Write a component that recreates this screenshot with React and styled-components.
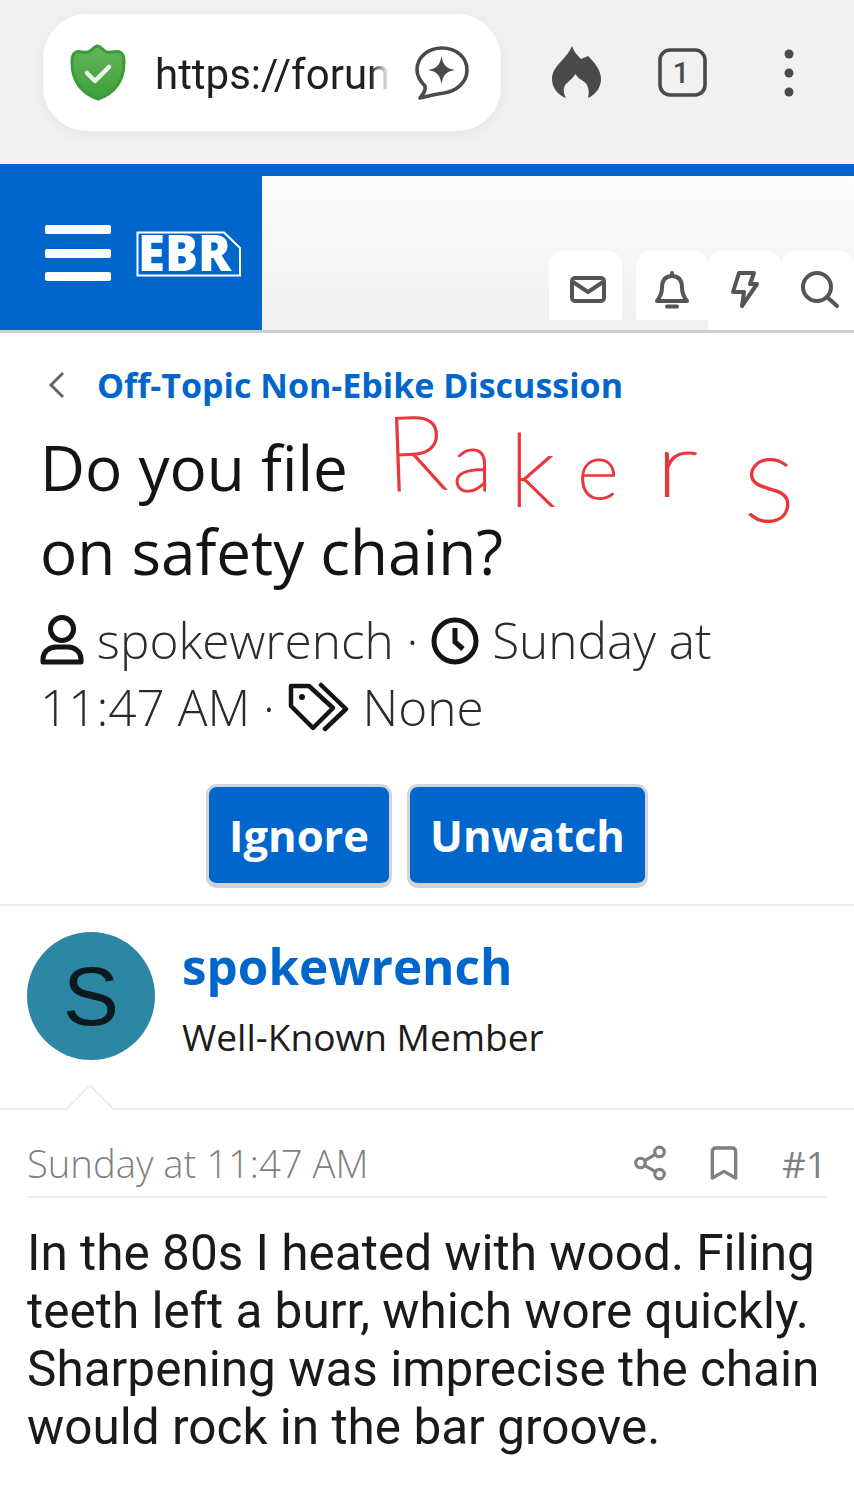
import { Bookmark, Share2 } from 'lucide-react'
import styled, { createGlobalStyle } from 'styled-components'

const Global = createGlobalStyle`
  html, body { margin: 0; padding: 0; background: #fff; }
  body { width: 854px; height: 1500px; overflow: hidden; font-family: "Open Sans", sans-serif; color: #141414; }
`

const BrowserBar = styled.div`
  height: 164px;
  background: #f1f1f1;
  display: flex;
  align-items: flex-start;
  padding: 14px 0 0 43px;
  box-sizing: border-box;
`
const UrlPill = styled.div`
  width: 458px;
  height: 117px;
  background: #fff;
  border-radius: 44px;
  box-shadow: 0 4px 16px rgba(0, 0, 0, 0.05);
  display: flex;
  align-items: center;
  padding-left: 27px;
  box-sizing: border-box;
`
const UrlText = styled.div`
  width: 234px;
  margin-left: 29px;
  margin-right: 26px;
  padding-top: 3px;
  overflow: hidden;
  white-space: nowrap;
  font: 400 42px Roboto, sans-serif;
  color: #1f1f1f;
  -webkit-mask-image: linear-gradient(to right, #000 92%, transparent);
  mask-image: linear-gradient(to right, #000 92%, transparent);
`
const BarIcons = styled.div`
  display: flex;
  align-items: center;
  height: 117px;
  margin-left: 51px;
`
const TabCount = styled.svg`
  margin-left: 56px;
`
const MoreDots = styled.svg`
  margin-left: 77px;
`

const Header = styled.header`
  height: 169px;
  box-sizing: border-box;
  border-top: 12px solid #0066cc;
  border-bottom: 3px solid #cfcfcf;
  display: flex;
  background: linear-gradient(#fdfdfd, #f0f0f0);
`
const BrandPanel = styled.div`
  width: 262px;
  background: #0066cc;
  display: flex;
  align-items: flex-start;
  padding: 49px 0 0 45px;
  box-sizing: border-box;
  gap: 25px;
`
const Burger = styled.div`
  display: flex;
  flex-direction: column;
  gap: 14.5px;
`
const BurgerBar = styled.span`
  display: block;
  width: 66px;
  height: 9px;
  border-radius: 2px;
  background: #fff;
`
const Logo = styled.svg`
  margin-top: 6px;
  overflow: visible;
`
const TabRow = styled.nav`
  flex: 1;
  display: flex;
  justify-content: flex-end;
  align-items: flex-start;
  padding-top: 75px;
`
const NavTab = styled.div`
  width: ${p => p.$w || 73}px;
  height: ${p => (p.$tall ? 79 : 69)}px;
  margin-right: ${p => p.$gap || 0}px;
  background: #fff;
  border-radius: 14px 14px 0 0;
  display: flex;
  justify-content: center;
  padding-top: ${p => p.$top || 20}px;
  padding-left: ${p => p.$nudge || 0}px;
  box-sizing: border-box;
`

const Crumb = styled.div`
  display: flex;
  align-items: center;
  height: 46px;
  margin: 29px 0 0 47px;
  gap: 28px;
  font-size: 34px;
  font-weight: 700;
  color: #0066cc;
`
const Title = styled.h1`
  margin: 17px 0 0 40px;
  font-size: 62px;
  line-height: 84px;
  font-weight: 400;
  color: #141414;
  white-space: nowrap;
`
const Scrawl = styled.span`
  display: inline-block;
  height: 0;
  line-height: 0;
  margin-left: 37px;
  color: #e8383b;
  font-family: "Lato", sans-serif;
  font-weight: 100;
  -webkit-text-stroke: 2px #e8383b;
`
const ScrawlLetter = styled.span`
  display: inline-block;
  font-size: ${p => p.$size}px;
  margin-left: ${p => p.$gap || 0}px;
  transform-origin: left bottom;
  transform: translateY(${p => p.$drop || 0}px) rotate(${p => p.$tilt || 0}deg)
    scaleX(${p => p.$sx || 1});
`
const Meta = styled.div`
  margin: 14px 0 0 40px;
  font-size: 49.5px;
  line-height: 67px;
  font-weight: 300;
  color: #2b2b2b;
  white-space: nowrap;
`
const MetaIcon = styled.svg`
  vertical-align: -6px;
  color: #141414;
`
const Actions = styled.div`
  display: flex;
  justify-content: center;
  gap: 15px;
  margin-top: 43px;
`
const ActionButton = styled.button`
  height: 104px;
  padding: 0 20px;
  margin: 0;
  box-sizing: border-box;
  background: #0066cc;
  color: #fff;
  border: 3px solid #d2d5d8;
  border-bottom-width: 5px;
  border-radius: 11px;
  font: 700 43.5px "Open Sans", sans-serif;
`
const Divider = styled.div`
  height: 2px;
  background: #ececec;
  margin-top: 16px;
`
const Author = styled.section`
  position: relative;
  height: 204px;
  box-sizing: border-box;
  padding: 26px 0 0 27px;
  display: flex;
  gap: 27px;
  border-bottom: 2px solid #ededed;
`
const Avatar = styled.div`
  width: 128px;
  height: 128px;
  border-radius: 50%;
  background: #2e86a5;
  color: #0c1a20;
  display: flex;
  align-items: center;
  justify-content: center;
  font: 400 84px "Liberation Sans", sans-serif;
`
const AuthorName = styled.div`
  font-size: 49.4px;
  line-height: 68px;
  font-weight: 700;
  color: #0066cc;
`
const AuthorRole = styled.div`
  margin-top: 12px;
  font-size: 37.1px;
  line-height: 50px;
  color: #1c1c1c;
`
const Arrow = styled.span`
  position: absolute;
  left: 73px;
  bottom: -17px;
  width: 34px;
  height: 34px;
  box-sizing: border-box;
  background: #fff;
  border-top: 2px solid #ededed;
  border-left: 2px solid #ededed;
  transform: rotate(45deg);
`
const PostHead = styled.div`
  margin: 20px 27px 0;
  height: 66px;
  display: flex;
  align-items: center;
  border-bottom: 2px solid #ececec;
  color: #808080;
  font-size: 38.2px;
  font-weight: 300;
`
const PostTools = styled.div`
  margin-left: auto;
  display: flex;
  align-items: center;
  color: #808080;
`
const PostNumber = styled.span`
  margin-left: 38px;
  font-weight: 400;
  font-size: 37px;
`
const BookmarkIcon = styled(Bookmark)`
  margin-left: 35px;
`
const PostBody = styled.p`
  margin: 26px 27px 0;
  font: 400 49.5px/58px Roboto, sans-serif;
  color: #1a1a1a;
  width: 810px;
`

function Shield() {
  return (
    <svg width="56" height="57" viewBox="0 0 56 57">
      <defs>
        <linearGradient id="sh" x1="0" y1="0" x2="0" y2="1">
          <stop offset="0" stopColor="#62b65a" />
          <stop offset="1" stopColor="#3f9e3a" />
        </linearGradient>
      </defs>
      <path
        d="M27.5 2C31 2 33 7 37 8C42 9.5 47 6 50 8C54 10 54 14 54 19C54 37 44 50 28 55C12 50 2 37 2 19C2 14 2 10 6 8C9 6 14 9.5 18 8C22 7 24 2 27.5 2Z"
        fill="url(#sh)"
        stroke="#3c9a37"
        strokeWidth="3"
      />
      <path d="M17 29L25 37L39 23" fill="none" stroke="#e9f6e7" strokeWidth="4.5" strokeLinecap="round" strokeLinejoin="round" />
    </svg>
  )
}

function SparkBubble() {
  return (
    <svg width="54" height="54" viewBox="0 0 54 54">
      <path
        d="M10 40C5 35 2 30 2 24C2 11 13 2 27 2C41 2 52 11 52 24C52 37 41 45 29 47C21 48 13 50 5 52C8 48 11 45 10 40Z"
        fill="none"
        stroke="#4a4a4a"
        strokeWidth="3.6"
        strokeLinejoin="round"
      />
      <path d="M26.5 10C28 19 31 22.5 40 24C31 25.5 28 29 26.5 38C25 29 22 25.5 13 24C22 22.5 25 19 26.5 10Z" fill="#4a4a4a" />
    </svg>
  )
}

function Flame() {
  return (
    <svg width="50" height="53" viewBox="0 0 50 53">
      <path
        d="M20 0C22 6 26 10 29 13C31 12 34 11 36 10C42 16 49 24 49 33C49 42 43 49 36 52C38 44 36 38 31 35C28 33 25 31 23.5 28C21 32 17 35 14 38C11 41 11 47 14 52C6 49 0 42 0 33C0 20 14 14 20 0Z"
        fill="#4a4a4a"
      />
    </svg>
  )
}

function Stroke({ w, h, children }) {
  return (
    <svg width={w} height={h} viewBox={`0 0 ${w} ${h}`} fill="none" stroke="#555" strokeWidth="4" strokeLinecap="round" strokeLinejoin="round">
      {children}
    </svg>
  )
}

export default function App() {
  return (
    <>
      <Global />
      <BrowserBar>
        <UrlPill>
          <Shield />
          <UrlText>https://forum</UrlText>
          <SparkBubble />
        </UrlPill>
        <BarIcons>
          <Flame />
          <TabCount width="49" height="49" viewBox="0 0 49 49">
            <rect x="2" y="2" width="45" height="45" rx="10" fill="none" stroke="#4a4a4a" strokeWidth="3.6" />
            <text x="23" y="35" textAnchor="middle" fontFamily="Roboto" fontSize="29" fontWeight="500" fill="#4a4a4a">1</text>
          </TabCount>
          <MoreDots width="10" height="48" viewBox="0 0 10 48">
            <circle cx="5" cy="5" r="4.5" fill="#4a4a4a" />
            <circle cx="5" cy="24" r="4.5" fill="#4a4a4a" />
            <circle cx="5" cy="43" r="4.5" fill="#4a4a4a" />
          </MoreDots>
        </BarIcons>
      </BrowserBar>

      <Header>
        <BrandPanel>
          <Burger>
            <BurgerBar />
            <BurgerBar />
            <BurgerBar />
          </Burger>
          <Logo width="106" height="46" viewBox="0 0 106 46">
            <path d="M1.5 1.5H88L104 17V44.5H1.5Z" fill="none" stroke="#fff" strokeWidth="2" />
            <text x="2" y="40" fontFamily="Open Sans" fontWeight="800" fontSize="49" fill="#fff">EBR</text>
          </Logo>
        </BrandPanel>
        <TabRow>
          <NavTab $gap={14} $top={25} $nudge={5}>
            <Stroke w={36} h={27}>
              <rect x="2" y="2" width="32" height="23" rx="3" />
              <path d="M3 6L18 16L33 6" />
            </Stroke>
          </NavTab>
          <NavTab $w={72}>
            <Stroke w={36} h={39}>
              <path d="M18 5C10 5 8 11 8 17C8 23 6 26 3 30H33C30 26 28 23 28 17C28 11 26 5 18 5Z" />
              <path d="M18 2V5" />
              <path d="M13 35.5H23" />
            </Stroke>
          </NavTab>
          <NavTab $tall>
            <Stroke w={29} h={37}>
              <path d="M9 2H24L20 13H27L12 35L14 21H3Z" />
            </Stroke>
          </NavTab>
          <NavTab $tall $nudge={4}>
            <Stroke w={38} h={37}>
              <circle cx="16" cy="16" r="14" />
              <path d="M26 26L36 35" />
            </Stroke>
          </NavTab>
        </TabRow>
      </Header>

      <Crumb>
        <svg width="22" height="30" viewBox="0 0 22 30" fill="none" stroke="#666" strokeWidth="3">
          <path d="M16 3L4 15L16 27" />
        </svg>
        Off-Topic Non-Ebike Discussion
      </Crumb>

      <Title>
        Do you file
        <Scrawl>
          <ScrawlLetter $size={104} $tilt={-2}>R</ScrawlLetter>
          <ScrawlLetter $size={85} $gap={6}>a</ScrawlLetter>
          <ScrawlLetter $size={100} $gap={17} $drop={15}>k</ScrawlLetter>
          <ScrawlLetter $size={80} $gap={23} $drop={8}>e</ScrawlLetter>
          <ScrawlLetter $size={88} $gap={36} $drop={5} $sx={1.4}>r</ScrawlLetter>
          <ScrawlLetter $size={125} $gap={58} $drop={30}>s</ScrawlLetter>
        </Scrawl>
        <br />
        on safety chain?
      </Title>

      <Meta>
        <MetaIcon width="44" height="50" viewBox="0 0 44 50" fill="none" stroke="currentColor" strokeWidth="5">
          <circle cx="22" cy="14" r="11.5" />
          <path d="M3 44C3 37 9 32 16 32H28C35 32 41 37 41 44V47H3Z" strokeLinejoin="round" />
        </MetaIcon>{' '}
        spokewrench ·{' '}
        <MetaIcon width="48" height="48" viewBox="0 0 48 48" fill="none" stroke="currentColor" strokeWidth="5">
          <circle cx="24" cy="24" r="21" />
          <path d="M24 11V25L32 32" />
        </MetaIcon>{' '}
        Sunday at
        <br />
        11:47 AM ·{' '}
        <MetaIcon width="62" height="50" viewBox="0 0 62 50" fill="none" stroke="currentColor" strokeWidth="4.5" strokeLinejoin="round" strokeLinecap="round">
          <path d="M3 4H21L45 26L25 46L3 24Z" />
          <circle cx="14" cy="15" r="3" fill="currentColor" stroke="none" />
          <path d="M33 3L58 27L37 47" />
        </MetaIcon>{' '}
        None
      </Meta>

      <Actions>
        <ActionButton>Ignore</ActionButton>
        <ActionButton>Unwatch</ActionButton>
      </Actions>

      <Divider />

      <Author>
        <Avatar>S</Avatar>
        <div>
          <AuthorName>spokewrench</AuthorName>
          <AuthorRole>Well-Known Member</AuthorRole>
        </div>
        <Arrow />
      </Author>

      <PostHead>
        Sunday at 11:47 AM
        <PostTools>
          <Share2 size={38} strokeWidth={2} />
          <BookmarkIcon size={40} strokeWidth={2} />
          <PostNumber>#1</PostNumber>
        </PostTools>
      </PostHead>

      <PostBody>
        In the 80s I heated with wood. Filing teeth left a burr, which wore quickly. Sharpening was imprecise the chain would rock in the bar groove.
      </PostBody>
    </>
  )
}
